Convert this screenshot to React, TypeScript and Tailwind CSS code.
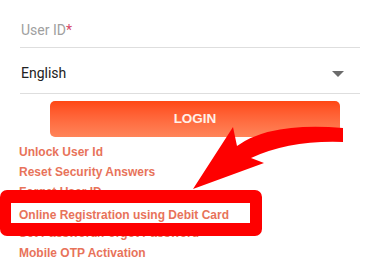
const LINKS = [
  'Unlock User Id',
  'Reset Security Answers',
  'Forget User ID',
  'Online Registration using Debit Card',
  'Set Password/Forgot Password',
  'Mobile OTP Activation',
];

export default function App() {
  return (
    <div className="relative w-[369px] h-[273px] bg-white overflow-hidden">
      <div className="pl-[20px] pr-[9px]">
        {/* User ID field */}
        <div className="h-[48px] pt-[17px] border-b border-[#dedede] pl-px">
          <span className="text-[14px] leading-[20px] text-[#a0a0a0] font-['Roboto',sans-serif]">
            User ID<span className="text-[#d64a6a]">*</span>
          </span>
        </div>

        {/* Language select */}
        <div className="h-[46px] pt-[15px] pr-[16px] border-b border-[#dedede] pl-px flex justify-between">
          <span className="text-[14px] leading-[20px] text-[#222] font-['Roboto',sans-serif]">
            English
          </span>
          <svg width="12" height="6" viewBox="0 0 12 6" className="mt-[8px]">
            <path d="M0 0 L12 0 L6 6 Z" fill="#6b6b6b" />
          </svg>
        </div>

        <button className="mt-[7px] ml-[30px] w-[290px] h-[36px] rounded-[5px] bg-gradient-to-b from-[#ff4712] to-[#ff8459] text-[#fff1ea] text-[13.5px] font-bold font-['Liberation_Sans',Arial,sans-serif] flex items-center justify-center">
          LOGIN
        </button>
      </div>

      {/* Links */}
      <div className="mt-[5px] pl-[19px] flex flex-col font-['Liberation_Sans',Arial,sans-serif]">
        {LINKS.map((l, i) => (
          <span
            key={l}
            className={`text-[12px] leading-[20.2px] font-bold text-[#e8735a] ${
              i === 3 ? 'relative top-[2px]' : ''
            }`}
          >
            {l}
          </span>
        ))}
      </div>

      {/* Highlight frame */}
      <div className="absolute left-0 top-[190px] w-[262px] h-[46px] rounded-[7px] border-solid border-[#fe0000] border-l-[11px] border-t-[13px] border-r-[12px] border-b-[13px]" />

      {/* Arrow */}
      <svg className="absolute left-0 top-0" width="369" height="273" viewBox="0 0 369 273">
        <path
          d="M193 189 L233 127 L237 146 Q270 122 343 128 L343 142 Q290 140 251 158 L264 163 Z"
          fill="#fe0000"
        />
      </svg>
    </div>
  );
}
